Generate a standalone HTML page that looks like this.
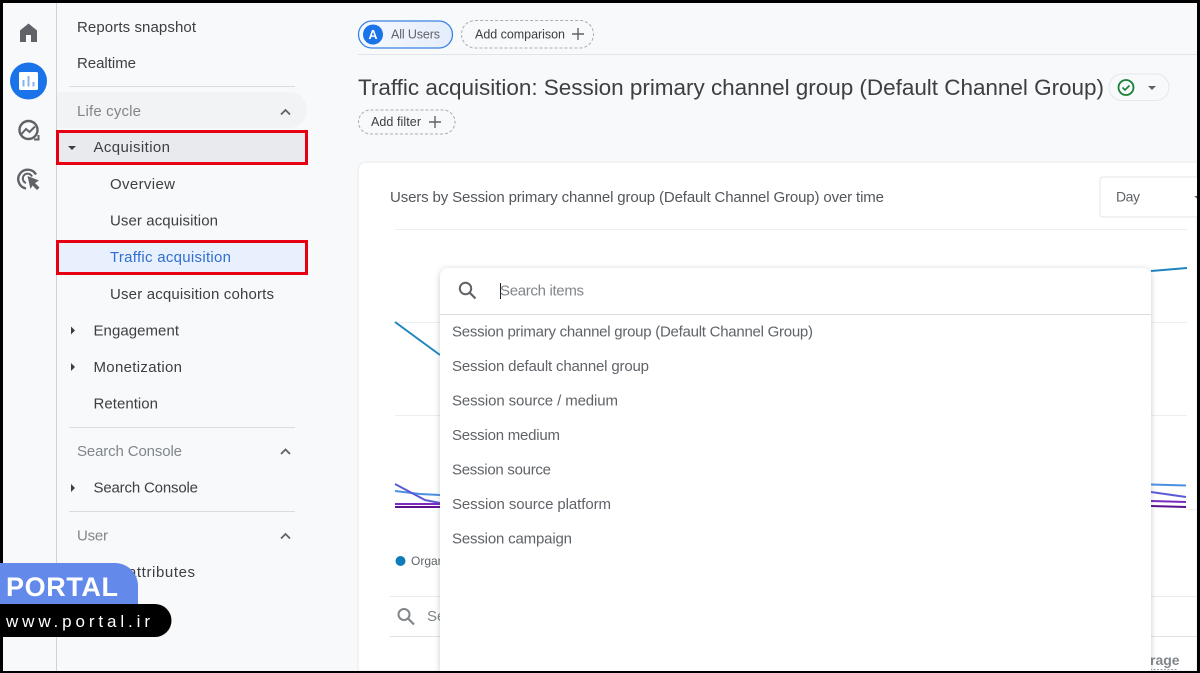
<!DOCTYPE html>
<html><head><meta charset="utf-8"><title>Traffic acquisition</title>
<style>
html,body{margin:0;padding:0;background:#000;width:1200px;height:673px;overflow:hidden}
svg{display:block;filter:blur(.3px)}
text{font-family:"Liberation Sans",sans-serif;font-size:15px;fill:#3c4043}
.s{fill:#80868b}
.p{fill:#5f6368}
</style></head>
<body>
<svg width="1200" height="673" viewBox="0 0 1200 673" xmlns="http://www.w3.org/2000/svg">
<defs>
<linearGradient id="g" x1="0" x2="1" y1="0" y2="0"><stop offset="0" stop-color="#f6f9fe"/><stop offset="1" stop-color="#e4edfc"/></linearGradient>
<filter id="sh" x="-5%" y="-5%" width="110%" height="110%"><feDropShadow dx="0" dy="1" stdDeviation="3" flood-color="#3c4043" flood-opacity=".28"/></filter>
</defs>
<rect width="1200" height="673" fill="#000"/>
<rect x="3" y="3" width="1194" height="668" fill="#f8f9fb"/>
<rect x="56" y="3" width="1" height="668" fill="#d0d2d6"/>

<!-- rail icons -->
<path d="M28.500 23.500 L20 30.500 V42 H26 V35 H31 V42 H37 V30.500 Z" fill="#5f6368"/>
<circle cx="28.500" cy="81" r="18.500" fill="#1a73e8"/>
<rect x="19" y="72" width="19" height="18" rx="1.500" fill="#fff"/>
<path d="M23.500 80v6.500M28.500 76v10.500M33.500 82v4.500" stroke="#8ab0ef" stroke-width="2" fill="none"/>
<circle cx="28.500" cy="130" r="9" fill="none" stroke="#5f6368" stroke-width="2.400"/>
<path d="M21.500 134 L26 129 L29.500 132 L35 126.500" fill="none" stroke="#5f6368" stroke-width="2"/>
<path d="M34 139.500h4.500v-4.500" fill="none" stroke="#5f6368" stroke-width="2"/>
<path d="M36 174.500 A9.500 9.500 0 1 0 26 188.500" fill="none" stroke="#5f6368" stroke-width="2.400"/>
<path d="M32 176.500 A4.800 4.800 0 1 0 26 183" fill="none" stroke="#5f6368" stroke-width="2"/>
<path d="M27.500 176 L39 180.500 L35 183 L39.500 187.500 L37 190 L32.500 185.500 L30.500 189 Z" fill="#5f6368"/>

<!-- sidebar -->
<text x="77" y="32" textLength="119" lengthAdjust="spacing">Reports snapshot</text>
<text x="77" y="68" textLength="59" lengthAdjust="spacing">Realtime</text>
<rect x="69" y="86" width="226" height="1" fill="#dadce0"/>
<path d="M57 92H289a18 18 0 0 1 0 36H57Z" fill="#f1f3f4"/>
<text x="77" y="116" textLength="64" lengthAdjust="spacing" class="s">Life cycle</text>
<path d="M281 114.500l4.500-4.500 4.500 4.500" fill="none" stroke="#5f6368" stroke-width="1.800"/>

<rect x="57.500" y="131.500" width="249" height="32" fill="#e8eaed"/>
<rect x="57.500" y="131.500" width="249" height="32" fill="none" stroke="#e60012" stroke-width="3"/>
<path d="M68 146h8l-4 4z" fill="#3c4043"/>
<text x="93.500" y="152" textLength="76.500" lengthAdjust="spacing">Acquisition</text>
<text x="110" y="189" textLength="65" lengthAdjust="spacing">Overview</text>
<text x="110" y="225.500" textLength="108" lengthAdjust="spacing">User acquisition</text>
<rect x="57.500" y="241.500" width="249" height="32" fill="#e8f0fe"/>
<rect x="57.500" y="241.500" width="249" height="32" fill="none" stroke="#e60012" stroke-width="3"/>
<text x="110" y="262" textLength="121" lengthAdjust="spacing" style="fill:#2f6fd0">Traffic acquisition</text>
<text x="110" y="299" textLength="164" lengthAdjust="spacing">User acquisition cohorts</text>
<path d="M71 326.500l4 4-4 4z" fill="#3c4043"/>
<text x="93.500" y="335.500" textLength="85.500" lengthAdjust="spacing">Engagement</text>
<path d="M71 363l4 4-4 4z" fill="#3c4043"/>
<text x="93.500" y="372" textLength="88.500" lengthAdjust="spacing">Monetization</text>
<text x="93.500" y="408.500" textLength="64.500" lengthAdjust="spacing">Retention</text>
<rect x="69" y="427" width="226" height="1" fill="#dadce0"/>
<text x="77" y="456" textLength="105" lengthAdjust="spacing" class="s">Search Console</text>
<path d="M281 454l4.500-4.500 4.500 4.500" fill="none" stroke="#5f6368" stroke-width="1.800"/>
<path d="M71 484l4 4-4 4z" fill="#3c4043"/>
<text x="93.500" y="492.500" textLength="104.500" lengthAdjust="spacing">Search Console</text>
<rect x="69" y="511" width="226" height="1" fill="#dadce0"/>
<text x="77" y="540.500" textLength="31" lengthAdjust="spacing" class="s">User</text>
<path d="M281 538.500l4.500-4.500 4.500 4.500" fill="none" stroke="#5f6368" stroke-width="1.800"/>
<text x="128" y="577" textLength="67" lengthAdjust="spacing">attributes</text>

<!-- top chips -->
<rect x="358.500" y="21" width="94" height="27" rx="13.500" fill="url(#g)" stroke="#3b82e6" stroke-width="1.300"/>
<circle cx="373" cy="34.500" r="10" fill="#1a73e8"/>
<text x="373" y="39" text-anchor="middle" style="fill:#fff;font-size:12.500px;font-weight:700">A</text>
<text x="391" y="38.500" textLength="49" lengthAdjust="spacing" class="p" style="font-size:12.500px">All Users</text>
<rect x="461.500" y="20.500" width="132" height="27.500" rx="13.700" fill="none" stroke="#aaadb1" stroke-dasharray="3 2"/>
<text x="475" y="38.500" textLength="90" lengthAdjust="spacing" style="font-size:12.500px">Add comparison</text>
<path d="M578 28v12M572 34h12" stroke="#5f6368" stroke-width="1.400"/>
<rect x="358" y="54" width="839" height="1" fill="#e3e4e7"/>
<text x="358" y="95" textLength="746" lengthAdjust="spacing" style="font-size:22.500px;fill:#3c4043">Traffic acquisition: Session primary channel group (Default Channel Group)</text>
<rect x="1109" y="74" width="60" height="26.500" rx="13.200" fill="#f8f9fb" stroke="#e6e7ea"/>
<circle cx="1126" cy="87.500" r="7.500" fill="none" stroke="#188038" stroke-width="1.800"/>
<path d="M1122.500 87.500l2.500 2.500 4.500-4.500" fill="none" stroke="#188038" stroke-width="1.600"/>
<path d="M1148 86h8l-4 4z" fill="#5f6368"/>
<rect x="358.500" y="110" width="96.500" height="24" rx="12" fill="none" stroke="#aaadb1" stroke-dasharray="3 2"/>
<text x="371" y="126" textLength="50" lengthAdjust="spacing" style="font-size:12.500px">Add filter</text>
<path d="M435 116v12M429 122h12" stroke="#5f6368" stroke-width="1.400"/>

<!-- card -->
<path d="M1197 162H366a8 8 0 0 0-8 8V671H1197Z" fill="#fff" stroke="#e8eaed"/>
<text x="390" y="202" textLength="494" lengthAdjust="spacing" style="fill:#53575b">Users by Session primary channel group (Default Channel Group) over time</text>
<rect x="1100" y="177" width="110" height="40" rx="3" fill="#fff" stroke="#e3e4e7"/>
<text x="1116" y="201.500" textLength="24" lengthAdjust="spacing" class="p" style="font-size:14px">Day</text>
<path d="M1194 196h3v2.500z" fill="#5f6368"/>

<!-- chart -->
<path d="M395 229.500H1187M395 322.500H1187M395 415.500H1187M1188 509.500H1197" stroke="#eceef0" fill="none"/>
<path d="M395 322L440 355" stroke="#1f85c0" stroke-width="2" fill="none"/>
<path d="M1151 271L1187 268" stroke="#1f85c0" stroke-width="2" fill="none"/>
<path d="M395 491L420 494L440 495" stroke="#4a90e2" stroke-width="2" fill="none"/>
<path d="M395 484L425 500L440 503" stroke="#5b5bd6" stroke-width="2" fill="none"/>
<path d="M395 504H440" stroke="#7b2cbf" stroke-width="2" fill="none"/>
<path d="M395 507H440" stroke="#5e108f" stroke-width="2" fill="none"/>
<path d="M1151 484.500L1186 485.500" stroke="#4a90e2" stroke-width="2" fill="none"/>
<path d="M1151 492L1186 497" stroke="#5b5bd6" stroke-width="2" fill="none"/>
<path d="M1151 501L1186 502" stroke="#7b2cbf" stroke-width="2" fill="none"/>
<path d="M1151 506L1186 507" stroke="#5e108f" stroke-width="2" fill="none"/>
<circle cx="400.500" cy="561" r="5" fill="#0f7cb8"/>
<text x="411" y="565" class="p" style="font-size:12px">Organic</text>

<rect x="390" y="596" width="807" height="1" fill="#e8eaed"/>
<rect x="390" y="636" width="807" height="1" fill="#e0e1e4"/>
<circle cx="404" cy="614.500" r="5.500" fill="none" stroke="#80868b" stroke-width="2"/>
<path d="M408 618.500l6 6" stroke="#80868b" stroke-width="2.200"/>
<text x="427" y="621" class="s">Se</text>
<text x="1150" y="665" style="font-size:14px;font-weight:700;fill:#80868b">rage</text>
<path d="M1150 669.500H1178" stroke="#9aa0a6" stroke-dasharray="2 1.500"/>

<!-- popup -->
<path d="M440 671V276a8 8 0 0 1 8-8H1143a8 8 0 0 1 8 8V671Z" fill="#fff" filter="url(#sh)"/>
<rect x="440" y="314" width="711" height="1" fill="#dadce0"/>
<circle cx="465.500" cy="288.500" r="5.700" fill="none" stroke="#5f6368" stroke-width="2"/>
<path d="M469.500 292.500l6 6" stroke="#5f6368" stroke-width="2.200"/>
<rect x="500" y="283" width="1" height="16" fill="#202124"/>
<text x="500" y="295.500" textLength="84" lengthAdjust="spacing" style="fill:#80868b">Search items</text>
<text x="452" y="336.500" textLength="361" lengthAdjust="spacing" class="p">Session primary channel group (Default Channel Group)</text>
<text x="452" y="371" textLength="197" lengthAdjust="spacing" class="p">Session default channel group</text>
<text x="452" y="405.500" textLength="166" lengthAdjust="spacing" class="p">Session source / medium</text>
<text x="452" y="440" textLength="108" lengthAdjust="spacing" class="p">Session medium</text>
<text x="452" y="474.500" textLength="99" lengthAdjust="spacing" class="p">Session source</text>
<text x="452" y="509" textLength="159" lengthAdjust="spacing" class="p">Session source platform</text>
<text x="452" y="543.500" textLength="120" lengthAdjust="spacing" class="p">Session campaign</text>

<!-- watermark -->
<path d="M0 563H115a23 23 0 0 1 23 23V605H0Z" fill="#6389ea"/>
<text x="6" y="596" textLength="112" lengthAdjust="spacing" style="fill:#fff;font-size:27px;font-weight:700">PORTAL</text>
<path d="M0 604H155a16.500 16.500 0 0 1 0 33H0Z" fill="#000"/>
<text x="6" y="627" textLength="144" lengthAdjust="spacing" style="fill:#fff;font-size:17px">www.portal.ir</text>

<!-- screenshot frame -->
<rect x="0" y="0" width="1200" height="3" fill="#000"/>
<rect x="1197" y="0" width="3" height="673" fill="#000"/>
<rect x="0" y="671" width="1200" height="2" fill="#000"/>
<rect x="0" y="0" width="3" height="563" fill="#000"/>
<rect x="0" y="637" width="3" height="36" fill="#000"/>
</svg>
</body></html>
